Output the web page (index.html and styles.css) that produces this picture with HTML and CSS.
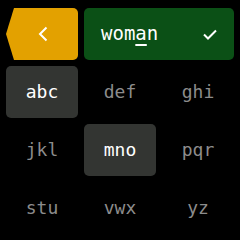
FILE: index.html
```html
<!DOCTYPE html>
<html lang="en">
<head>
    <meta charset="UTF-8">
    <title>Word Entry</title>
    <link rel="stylesheet" href="styles.css">
</head>
<body>
    <div class="keypad">
        <div class="back-key">
            <svg width="10" height="16" viewBox="0 0 10 16">
                <path d="M8.5 1.5 L2 8 L8.5 14.5" fill="none" stroke="#fff" stroke-width="2"/>
            </svg>
        </div>
        <div class="word-field">
            <span class="word">wom<span class="cursor">a</span>n</span>
            <svg width="14" height="11" viewBox="0 0 14 11">
                <path d="M1 5.5 L5 9.5 L13 1.5" fill="none" stroke="#fff" stroke-width="2"/>
            </svg>
        </div>

        <div class="key active">abc</div>
        <div class="key">def</div>
        <div class="key">ghi</div>
        <div class="key">jkl</div>
        <div class="key active">mno</div>
        <div class="key">pqr</div>
        <div class="key">stu</div>
        <div class="key">vwx</div>
        <div class="key">yz</div>
    </div>
</body>
</html>
```

FILE: styles.css
```css
* {
    margin: 0;
    padding: 0;
    box-sizing: border-box;
}

body {
    background-color: #000;
    font-family: "DejaVu Sans Mono", "Liberation Mono", monospace;
    width: 240px;
    height: 240px;
    overflow: hidden;
}

.keypad {
    display: grid;
    grid-template-columns: repeat(3, 72px);
    grid-auto-rows: 52px;
    gap: 6px;
    padding: 8px 6px;
}

.back-key {
    background-color: #e3a100;
    border-radius: 0 5px 5px 0;
    clip-path: polygon(8px 0, 100% 0, 100% 100%, 8px 100%, 0 50%);
    display: flex;
    align-items: center;
    justify-content: center;
    padding-left: 1px;
}

.word-field {
    grid-column: span 2;
    background-color: #0b5016;
    border-radius: 5px;
    display: flex;
    align-items: center;
    justify-content: space-between;
    padding: 0 17px 2px 17px;
    color: #fff;
    font-size: 19px;
}

.word-field svg {
    margin-top: 2px;
}

.cursor {
    text-decoration: underline;
    text-decoration-thickness: 2px;
    text-underline-offset: 4px;
}

.key {
    display: flex;
    align-items: center;
    justify-content: center;
    font-size: 18px;
    color: #8c8c8c;
    border-radius: 5px;
    padding-bottom: 2px;
}

.key.active {
    background-color: #333532;
    color: #fff;
}
```
